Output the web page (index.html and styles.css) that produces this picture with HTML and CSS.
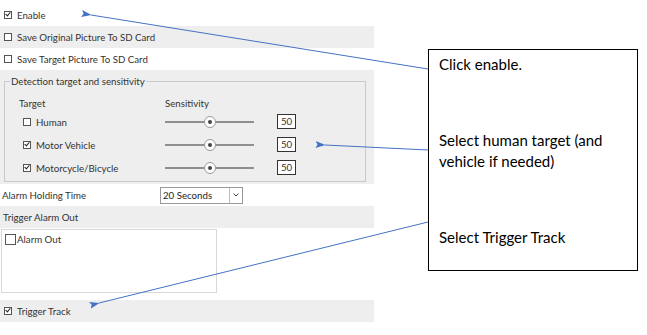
FILE: index.html
```html
<!DOCTYPE html>
<html>
<head>
    <title>Intrusion Settings</title>
    <link rel="stylesheet" href="styles.css">
</head>
<body>
    <div class="page">
        <div class="panel">
            <div class="row">
                <span class="cb checked"></span><span>Enable</span>
            </div>
            <div class="row gray">
                <span class="cb"></span><span>Save Original Picture To SD Card</span>
            </div>
            <div class="row">
                <span class="cb"></span><span>Save Target Picture To SD Card</span>
            </div>

            <div class="section gray">
                <fieldset class="detect">
                    <legend>Detection target and sensitivity</legend>
                    <div class="target-head">
                        <span class="col-name">Target</span>
                        <span>Sensitivity</span>
                    </div>
                    <div class="target-row">
                        <span class="col-name"><span class="cb"></span>Human</span>
                        <span class="slider"><span class="thumb"></span></span>
                        <span class="value">50</span>
                    </div>
                    <div class="target-row">
                        <span class="col-name"><span class="cb checked"></span>Motor Vehicle</span>
                        <span class="slider"><span class="thumb"></span></span>
                        <span class="value">50</span>
                    </div>
                    <div class="target-row">
                        <span class="col-name"><span class="cb checked"></span>Motorcycle/Bicycle</span>
                        <span class="slider"><span class="thumb"></span></span>
                        <span class="value">50</span>
                    </div>
                </fieldset>
            </div>

            <div class="row holding">
                <span class="holding-label">Alarm Holding Time</span>
                <span class="select">
                    <span class="select-text">20 Seconds</span>
                    <span class="select-btn">
                        <svg width="6" height="4" viewBox="0 0 6 4"><path d="M0.5 0.5 L3 3 L5.5 0.5" fill="none" stroke="#444" stroke-width="1"/></svg>
                    </span>
                </span>
            </div>
            <div class="row gray plain">Trigger Alarm Out</div>
            <div class="alarm-box">
                <span class="cb big"></span><span>Alarm Out</span>
            </div>
            <div class="row gray track">
                <span class="cb checked"></span><span>Trigger Track</span>
            </div>
        </div>

        <div class="callout">
            <p class="note-1">Click enable.</p>
            <p class="note-2">Select human target (and<br>vehicle if needed)</p>
            <p class="note-3">Select Trigger Track</p>
        </div>

        <svg class="arrows" width="647" height="335" viewBox="0 0 647 335">
            <defs>
                <marker id="head" markerWidth="10" markerHeight="8" refX="0.5" refY="4" orient="auto-start-reverse" markerUnits="userSpaceOnUse">
                    <path d="M0 4 L10 0.5 L8 4 L10 7.5 Z" fill="#4472c4"/>
                </marker>
            </defs>
            <line x1="428" y1="69" x2="91" y2="15" stroke="#4472c4" stroke-width="1" marker-end="url(#head)"/>
            <line x1="428" y1="150" x2="325" y2="145" stroke="#4472c4" stroke-width="1" marker-end="url(#head)"/>
            <line x1="428" y1="222" x2="99" y2="303" stroke="#4472c4" stroke-width="1" marker-end="url(#head)"/>
        </svg>
    </div>
</body>
</html>
```

FILE: styles.css
```css
body {
    margin: 0;
    background-color: #fff;
    font-family: "Lato", "Noto Sans", sans-serif;
    font-size: 9.7px;
    color: #333;
}
.page {
    position: relative;
    width: 647px;
    height: 335px;
    overflow: hidden;
}
.panel {
    width: 374px;
    padding-top: 4px;
}
.gray {
    background-color: #eeeeee;
}
.row {
    height: 22px;
    display: flex;
    align-items: center;
    padding-left: 4px;
}
.row.plain {
    padding-left: 3px;
}
.cb {
    display: inline-block;
    box-sizing: border-box;
    width: 8px;
    height: 8px;
    border: 1px solid #555;
    background: #fff;
    margin-right: 5px;
    position: relative;
    flex-shrink: 0;
}
.cb.checked::after {
    content: "";
    position: absolute;
    left: 1px;
    top: -1px;
    width: 2px;
    height: 4px;
    border-right: 1.3px solid #222;
    border-bottom: 1.3px solid #222;
    transform: translate(0.5px, 0) rotate(40deg);
}
.cb.big {
    width: 11px;
    height: 11px;
    margin-right: 1px;
}
.section {
    height: 114px;
    padding: 6px 8px 2px 4px;
    box-sizing: border-box;
}
.detect {
    margin: 0;
    padding: 0;
    height: 100%;
    box-sizing: border-box;
    border: 1px solid #c9c9c9;
}
.detect legend {
    padding: 0 1px;
    margin-left: 5px;
    line-height: 10px;
}
.target-head {
    display: flex;
    height: 14px;
    margin-top: 10px;
    padding-left: 14px;
    align-items: center;
}
.col-name {
    display: flex;
    align-items: center;
    width: 146px;
}
.target-row {
    display: flex;
    align-items: center;
    height: 23px;
    padding-left: 14px;
}
.target-row .col-name {
    padding-left: 4px;
    width: 142px;
}
.slider {
    position: relative;
    width: 89px;
    height: 2px;
    background-color: #8f8f8f;
    margin-right: 23px;
}
.thumb {
    position: absolute;
    left: 39px;
    top: -5px;
    box-sizing: border-box;
    width: 12px;
    height: 12px;
    border-radius: 50%;
    border: 1px solid #9a9a9a;
    background: #fff;
}
.thumb::after {
    content: "";
    position: absolute;
    left: 3px;
    top: 3px;
    width: 4px;
    height: 4px;
    border-radius: 50%;
    background-color: #444;
}
.value {
    box-sizing: border-box;
    width: 19px;
    height: 15px;
    border: 1px solid #333;
    background: #fff;
    text-align: center;
    line-height: 13px;
}
.holding {
    padding-left: 2px;
}
.holding-label {
    width: 158px;
}
.select {
    display: flex;
    box-sizing: border-box;
    width: 83px;
    height: 17px;
    border: 1px solid #999;
    background: #fff;
}
.select-text {
    flex: 1;
    padding-left: 2px;
    line-height: 15px;
    color: #222;
}
.select-btn {
    width: 12px;
    border-left: 1px solid #bbb;
    display: flex;
    align-items: center;
    justify-content: center;
}
.alarm-box {
    width: 216px;
    height: 64px;
    box-sizing: border-box;
    border: 1px solid #d8d8d8;
    margin: 1px 0 7px 1px;
    padding: 3px 0 0 3px;
    display: flex;
    align-items: flex-start;
    line-height: 13px;
}
.alarm-box .cb {
    margin-top: 1px;
}
.callout {
    position: absolute;
    left: 428px;
    top: 49px;
    width: 210px;
    height: 222px;
    box-sizing: border-box;
    border: 1px solid #000;
    background: #fff;
    padding-left: 10px;
    font-family: "Lato", "Open Sans", sans-serif;
    font-size: 15px;
    color: #000;
}
.callout p {
    margin: 0;
    line-height: 21px;
}
.note-1 {
    padding-top: 4px;
}
.note-2 {
    padding-top: 55px;
}
.note-3 {
    padding-top: 55px;
}
.arrows {
    position: absolute;
    left: 0;
    top: 0;
    pointer-events: none;
}
```
